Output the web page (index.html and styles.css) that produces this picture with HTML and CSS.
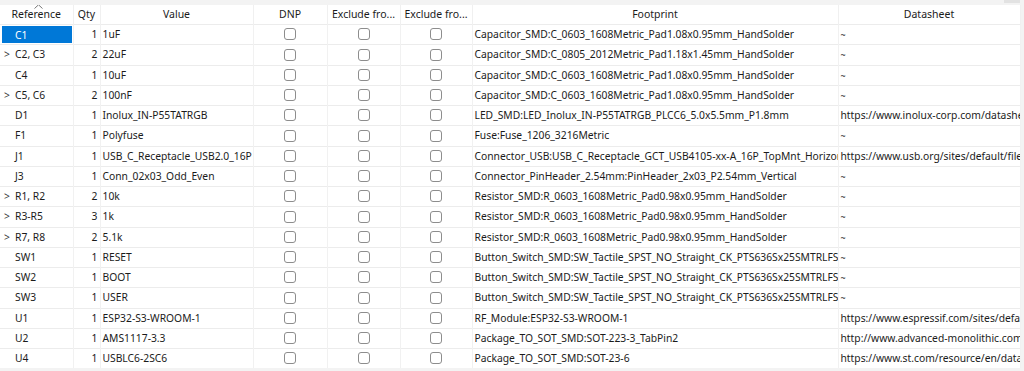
FILE: index.html
```html
<!DOCTYPE html>
<html>
<head>
<meta charset="utf-8">
<link rel="stylesheet" href="styles.css">
</head>
<body>
<div class="topband"><span class="scrollnub"></span></div>
<table class="grid">
<colgroup>
<col class="c-ref"><col class="c-qty"><col class="c-val"><col class="c-dnp"><col class="c-ex1"><col class="c-ex2"><col class="c-fp"><col class="c-ds">
</colgroup>
<thead>
<tr>
<th class="h-ref"><svg class="sort" width="9" height="5" viewBox="0 0 9 5"><path d="M0.5 4.5 L4.5 0.8 L8.5 4.5" fill="none" stroke="#777" stroke-width="1"/></svg>Reference</th>
<th>Qty</th>
<th>Value</th>
<th>DNP</th>
<th>Exclude fro...</th>
<th>Exclude fro...</th>
<th>Footprint</th>
<th>Datasheet</th>
</tr>
</thead>
<tbody>
<tr><td class="ref"><span class="sel">C1</span></td><td class="qty">1</td><td>1uF</td><td class="cb"><span class="box"></span></td><td class="cb"><span class="box"></span></td><td class="cb"><span class="box"></span></td><td>Capacitor_SMD:C_0603_1608Metric_Pad1.08x0.95mm_HandSolder</td><td class="ds">~</td></tr>
<tr><td class="ref"><span class="exp">&gt;</span>C2, C3</td><td class="qty">2</td><td>22uF</td><td class="cb"><span class="box"></span></td><td class="cb"><span class="box"></span></td><td class="cb"><span class="box"></span></td><td>Capacitor_SMD:C_0805_2012Metric_Pad1.18x1.45mm_HandSolder</td><td class="ds">~</td></tr>
<tr><td class="ref">C4</td><td class="qty">1</td><td>10uF</td><td class="cb"><span class="box"></span></td><td class="cb"><span class="box"></span></td><td class="cb"><span class="box"></span></td><td>Capacitor_SMD:C_0603_1608Metric_Pad1.08x0.95mm_HandSolder</td><td class="ds">~</td></tr>
<tr><td class="ref"><span class="exp">&gt;</span>C5, C6</td><td class="qty">2</td><td>100nF</td><td class="cb"><span class="box"></span></td><td class="cb"><span class="box"></span></td><td class="cb"><span class="box"></span></td><td>Capacitor_SMD:C_0603_1608Metric_Pad1.08x0.95mm_HandSolder</td><td class="ds">~</td></tr>
<tr><td class="ref">D1</td><td class="qty">1</td><td>Inolux_IN-P55TATRGB</td><td class="cb"><span class="box"></span></td><td class="cb"><span class="box"></span></td><td class="cb"><span class="box"></span></td><td>LED_SMD:LED_Inolux_IN-P55TATRGB_PLCC6_5.0x5.5mm_P1.8mm</td><td>https://www.inolux-corp.com/datasheet/SMDLED/RGB%20Top%20View/IN-P55TATRGB.pdf</td></tr>
<tr><td class="ref">F1</td><td class="qty">1</td><td>Polyfuse</td><td class="cb"><span class="box"></span></td><td class="cb"><span class="box"></span></td><td class="cb"><span class="box"></span></td><td>Fuse:Fuse_1206_3216Metric</td><td class="ds">~</td></tr>
<tr><td class="ref">J1</td><td class="qty">1</td><td>USB_C_Receptacle_USB2.0_16P</td><td class="cb"><span class="box"></span></td><td class="cb"><span class="box"></span></td><td class="cb"><span class="box"></span></td><td>Connector_USB:USB_C_Receptacle_GCT_USB4105-xx-A_16P_TopMnt_Horizontal</td><td>https://www.usb.org/sites/default/files/documents/usb_type-c.zip</td></tr>
<tr><td class="ref">J3</td><td class="qty">1</td><td>Conn_02x03_Odd_Even</td><td class="cb"><span class="box"></span></td><td class="cb"><span class="box"></span></td><td class="cb"><span class="box"></span></td><td>Connector_PinHeader_2.54mm:PinHeader_2x03_P2.54mm_Vertical</td><td class="ds">~</td></tr>
<tr><td class="ref"><span class="exp">&gt;</span>R1, R2</td><td class="qty">2</td><td>10k</td><td class="cb"><span class="box"></span></td><td class="cb"><span class="box"></span></td><td class="cb"><span class="box"></span></td><td>Resistor_SMD:R_0603_1608Metric_Pad0.98x0.95mm_HandSolder</td><td class="ds">~</td></tr>
<tr><td class="ref"><span class="exp">&gt;</span>R3-R5</td><td class="qty">3</td><td>1k</td><td class="cb"><span class="box"></span></td><td class="cb"><span class="box"></span></td><td class="cb"><span class="box"></span></td><td>Resistor_SMD:R_0603_1608Metric_Pad0.98x0.95mm_HandSolder</td><td class="ds">~</td></tr>
<tr><td class="ref"><span class="exp">&gt;</span>R7, R8</td><td class="qty">2</td><td>5.1k</td><td class="cb"><span class="box"></span></td><td class="cb"><span class="box"></span></td><td class="cb"><span class="box"></span></td><td>Resistor_SMD:R_0603_1608Metric_Pad0.98x0.95mm_HandSolder</td><td class="ds">~</td></tr>
<tr><td class="ref">SW1</td><td class="qty">1</td><td>RESET</td><td class="cb"><span class="box"></span></td><td class="cb"><span class="box"></span></td><td class="cb"><span class="box"></span></td><td>Button_Switch_SMD:SW_Tactile_SPST_NO_Straight_CK_PTS636Sx25SMTRLFS</td><td class="ds">~</td></tr>
<tr><td class="ref">SW2</td><td class="qty">1</td><td>BOOT</td><td class="cb"><span class="box"></span></td><td class="cb"><span class="box"></span></td><td class="cb"><span class="box"></span></td><td>Button_Switch_SMD:SW_Tactile_SPST_NO_Straight_CK_PTS636Sx25SMTRLFS</td><td class="ds">~</td></tr>
<tr><td class="ref">SW3</td><td class="qty">1</td><td>USER</td><td class="cb"><span class="box"></span></td><td class="cb"><span class="box"></span></td><td class="cb"><span class="box"></span></td><td>Button_Switch_SMD:SW_Tactile_SPST_NO_Straight_CK_PTS636Sx25SMTRLFS</td><td class="ds">~</td></tr>
<tr><td class="ref">U1</td><td class="qty">1</td><td>ESP32-S3-WROOM-1</td><td class="cb"><span class="box"></span></td><td class="cb"><span class="box"></span></td><td class="cb"><span class="box"></span></td><td>RF_Module:ESP32-S3-WROOM-1</td><td>https://www.espressif.com/sites/default/files/documentation/esp32-s3-wroom-1_wroom-1u_datasheet_en.pdf</td></tr>
<tr><td class="ref">U2</td><td class="qty">1</td><td>AMS1117-3.3</td><td class="cb"><span class="box"></span></td><td class="cb"><span class="box"></span></td><td class="cb"><span class="box"></span></td><td>Package_TO_SOT_SMD:SOT-223-3_TabPin2</td><td>http://www.advanced-monolithic.com/pdf/ds1117.pdf</td></tr>
<tr><td class="ref">U4</td><td class="qty">1</td><td>USBLC6-2SC6</td><td class="cb"><span class="box"></span></td><td class="cb"><span class="box"></span></td><td class="cb"><span class="box"></span></td><td>Package_TO_SOT_SMD:SOT-23-6</td><td>https://www.st.com/resource/en/datasheet/usblc6-2.pdf</td></tr>
</tbody>
</table>
</body>
</html>
```
FILE: styles.css
```css
html, body {
  margin: 0;
  padding: 0;
  background: #f3f3f3;
  font-family: "Noto Sans", "Open Sans", sans-serif;
  font-size: 10.3px;
  color: #1b1b1b;
}
.topband {
  height: 5px;
  position: relative;
}
.scrollnub {
  position: absolute;
  right: 4px;
  top: 0;
  width: 16px;
  height: 3px;
  background: #e2e2e2;
}
.grid {
  table-layout: fixed;
  border-collapse: collapse;
  width: 1020px;
  background: #fff;
}
.c-ref { width: 73px; }
.c-qty { width: 27px; }
.c-val { width: 153px; }
.c-dnp { width: 74px; }
.c-ex1 { width: 73px; }
.c-ex2 { width: 72px; }
.c-fp { width: 366px; }
.c-ds { width: 182px; }
th {
  height: 19px;
  padding: 0 2px;
  font-weight: normal;
  font-size: 10.5px;
  text-align: center;
  white-space: nowrap;
  overflow: hidden;
  border-right: 1px solid #f0f0f0;
  line-height: 19px;
  position: relative;
}
.h-ref .sort {
  position: absolute;
  left: 34px;
  top: -1px;
}
td {
  height: 19.25px;
  padding: 0 2px;
  white-space: nowrap;
  overflow: hidden;
  border-top: 1px solid #ececec;
  border-right: 1px solid #f1f1f1;
  line-height: 19px;
}
td.ref {
  padding-left: 15px;
  position: relative;
}
.exp {
  position: absolute;
  left: 4px;
  color: #333;
}
.sel {
  position: absolute;
  left: 2px;
  top: 1px;
  right: 1px;
  bottom: 1px;
  background: #0078d7;
  color: #fff;
  padding-left: 13px;
  line-height: 18px;
}
td.qty {
  text-align: right;
  padding-right: 2px;
  padding-left: 0;
}
td.cb {
  text-align: center;
  padding: 0;
}
.box {
  display: inline-block;
  width: 10px;
  height: 10px;
  border: 1px solid #8d8d8d;
  border-radius: 3px;
  vertical-align: middle;
  margin-top: -2px;
}
td.ds {
  font-size: 9px;
}
```
